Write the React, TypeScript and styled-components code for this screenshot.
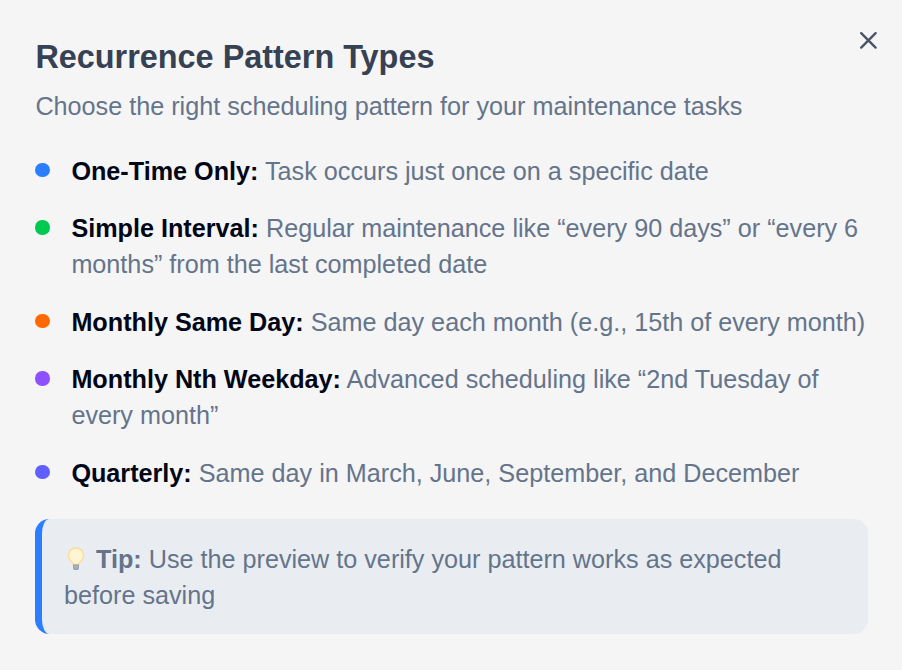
import styled, { createGlobalStyle } from 'styled-components'

type Pattern = {
  name: string
  detail: string
  color: string
}

const patterns: Pattern[] = [
  { name: 'One-Time Only:', detail: 'Task occurs just once on a specific date', color: '#2b7fff' },
  {
    name: 'Simple Interval:',
    detail: 'Regular maintenance like “every 90 days” or “every 6 months” from the last completed date',
    color: '#00c950'
  },
  { name: 'Monthly Same Day:', detail: 'Same day each month (e.g., 15th of every month)', color: '#ff6900' },
  {
    name: 'Monthly Nth Weekday:',
    detail: 'Advanced scheduling like “2nd Tuesday of every month”',
    color: '#8e51ff'
  },
  { name: 'Quarterly:', detail: 'Same day in March, June, September, and December', color: '#615fff' }
]

const GlobalStyle = createGlobalStyle`
  html, body {
    margin: 0;
    padding: 0;
    background: #f5f5f5;
  }
`

const Dialog = styled.div`
  position: relative;
  box-sizing: border-box;
  width: 902px;
  height: 670px;
  padding: 36px 34px 36px 35.4px;
  background: #f5f5f5;
  font-family: 'Liberation Sans', Arial, sans-serif;
  overflow: hidden;
`

const CloseButton = styled.button`
  position: absolute;
  top: 25.6px;
  right: 19px;
  width: 28.8px;
  height: 28.8px;
  padding: 0;
  border: 0;
  background: none;
  color: #4a5565;
  display: flex;
`

const Title = styled.h2`
  margin: 0;
  font-size: 32.4px;
  line-height: 42px;
  font-weight: 700;
  color: #364153;
`

const Subtitle = styled.p`
  margin: 10px 0 0;
  font-size: 25.2px;
  line-height: 36px;
  color: #64748b;
`

const List = styled.ul`
  list-style: none;
  margin: 28.6px 0 0;
  padding: 0;
  display: flex;
  flex-direction: column;
  gap: 21.6px;
`

const Item = styled.li`
  display: flex;
  gap: 21.6px;
`

const Dot = styled.span<{ $color: string }>`
  flex: none;
  width: 14.4px;
  height: 14.4px;
  margin-top: 10px;
  border-radius: 50%;
  background: ${(p) => p.$color};
`

const ItemText = styled.p`
  margin: 0;
  font-size: 25.2px;
  line-height: 36px;
  color: #64748b;
`

const ItemName = styled.strong`
  font-weight: 700;
  color: #020617;
`

const TipBox = styled.div`
  box-sizing: border-box;
  margin-top: 28px;
  height: 115.2px;
  padding: 21.6px;
  border-left: 7.2px solid #2b7fff;
  border-radius: 14.4px;
  background: #e9edf2;
  font-size: 25.2px;
  line-height: 36px;
  color: #64748b;
`

const TipLabel = styled.strong`
  font-weight: 700;
`

const BulbIcon = styled.svg`
  display: inline-block;
  width: 24px;
  height: 24px;
  margin-right: 8px;
  vertical-align: -3.5px;
`

const App = () => (
  <Dialog>
    <GlobalStyle />
    <CloseButton aria-label="Close">
      <svg width="28.8" height="28.8" viewBox="0 0 24 24" fill="none" stroke="currentColor" strokeWidth="2" strokeLinecap="round">
        <path d="M18 6 6 18" />
        <path d="m6 6 12 12" />
      </svg>
    </CloseButton>

    <Title>Recurrence Pattern Types</Title>
    <Subtitle>Choose the right scheduling pattern for your maintenance tasks</Subtitle>

    <List>
      {patterns.map((pattern) => (
        <Item key={pattern.name}>
          <Dot $color={pattern.color} />
          <ItemText>
            <ItemName>{pattern.name}</ItemName> {pattern.detail}
          </ItemText>
        </Item>
      ))}
    </List>

    <TipBox>
      <BulbIcon viewBox="0 0 24 24">
        <path d="M12 1a7.5 7.5 0 0 0-4.6 13.4c1 .8 1.6 2 1.6 3.1h6c0-1.1.6-2.3 1.6-3.1A7.5 7.5 0 0 0 12 1z" fill="#fdf5d3" stroke="#fcdc98" strokeWidth="1.4" />
        <path d="M9 17.5h6v3.7c0 1-1 1.8-3 1.8s-3-.8-3-1.8z" fill="#8f98a8" />
        <path d="M9.5 19.2h5M9.5 21h5" stroke="#cfd4dc" strokeWidth=".7" />
      </BulbIcon>
      <TipLabel>Tip:</TipLabel> Use the preview to verify your pattern works as expected before saving
    </TipBox>
  </Dialog>
)

export default App
